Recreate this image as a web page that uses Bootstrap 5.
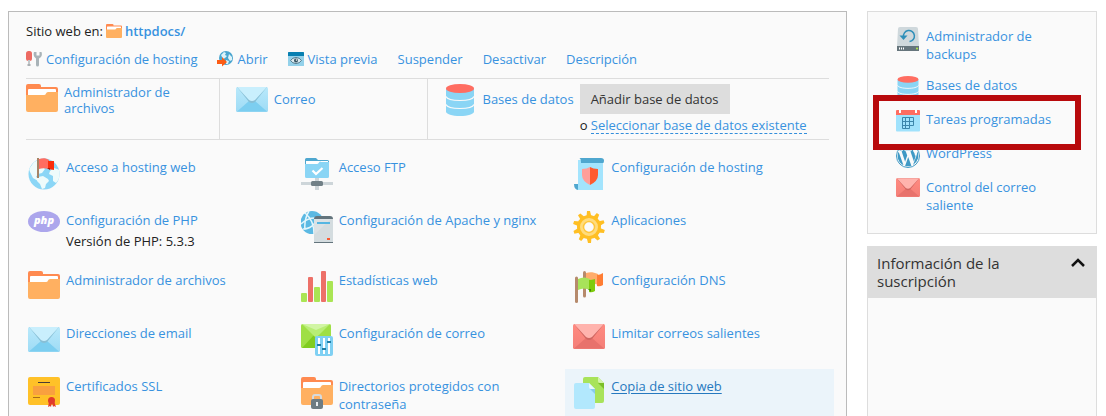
<!DOCTYPE html>
<html lang="es">
<head>
<meta charset="utf-8">
<meta name="viewport" content="width=device-width, initial-scale=1">
<title>httpdocs/</title>
<link href="https://cdn.jsdelivr.net/npm/bootstrap@5.3.0/dist/css/bootstrap.min.css" rel="stylesheet">
<style>
html { scrollbar-width: none; }
body { font: 13px/18px "Open Sans", "Noto Sans", sans-serif; color: #222; background: #fff; }
a { color: #3892df; text-decoration: none; }
a:hover { text-decoration: underline; }
svg { display: block; flex: none; }
.page { display: grid; grid-template-columns: minmax(0, 1fr) 230px; gap: 20px; padding: 11px 9px 0 8px; }
.panel { background: #fafafa; border: 1px solid #bbb; }
.site { padding: 10px 17px 24px; border-bottom: 0; }
.site-title { gap: 3px; }
.site-title svg { margin-top: 2px; }
.site-nav { gap: 4px 20px; margin-top: 10px; }
.site-nav a { gap: 4px; }
.site-nav svg { margin-top: 1px; }
.tools { display: grid; grid-template-columns: 24% 26% 1fr; margin: 10px 0; border: solid #ddd; border-width: 1px 0; }
.tool { min-height: 60px; padding-top: 5px; gap: 6px; }
.tool + .tool { border-left: 1px solid #ddd; padding-left: 16px; }
.tool-name { line-height: 16px; max-width: 130px; }
.tool-line { line-height: 30px; }
.btn-add { font-size: 13px; line-height: 18px; padding: 6px 11px; background: #ddd; color: #333; border: 0; border-radius: 0; }
.or-line { line-height: 16px; margin-top: 3px; }
.dashed { border-bottom: 1px dashed #338edb; display: inline-block; }
.features { display: grid; grid-template-columns: repeat(3, minmax(0, 1fr)); gap: 5px 4px; margin: 0 -5px 0 -6px; }
.feature { padding: 8px; gap: 6px; }
.feature p { margin: 3px 0 0; }
.feature.current { background: #ebf4fa; }
.feature.current a { color: #2679bf; text-decoration: underline; text-underline-offset: 2px; }
.side { border-color: #ddd; }
.shortcuts { padding: 15px 15px 6px 28px; }
.shortcuts li { display: flex; gap: 6px; min-height: 24px; margin-bottom: 10px; position: relative; }
.shortcuts a { padding-bottom: 3px; max-width: 130px; }
.marker { position: absolute; inset: -15px 0 -16px -23px; border: 6px solid #b80a0c; z-index: 1; pointer-events: none; }
.side-head { background: #ddd; border: 0; margin-top: 12px; padding: 8px 11px 8px 10px; font-size: 15px; line-height: 18px; color: #333; }
.side-head span { max-width: 150px; }
.side-head svg { margin-top: 2px; }
</style>
</head>
<body>
<svg width="0" height="0" class="position-absolute" aria-hidden="true">
  <defs>
    <linearGradient id="gBlue" x1="0" y1="0" x2="0" y2="1"><stop offset="0" stop-color="#b9e9fb"/><stop offset="1" stop-color="#9edbf5"/></linearGradient>
    <linearGradient id="gRed" x1="0" y1="0" x2="0" y2="1"><stop offset="0" stop-color="#ff8a80"/><stop offset="1" stop-color="#f47f78"/></linearGradient>
    <clipPath id="globeClip"><circle cx="16" cy="16" r="15.5"/></clipPath>
  </defs>
  <symbol id="folder" viewBox="0 0 32 32">
    <path fill="#ff8a50" d="M0 2a2 2 0 0 1 2-2h11a2 2 0 0 1 2 2v1h15a2 2 0 0 1 2 2v9H0z"/>
    <path fill="#fff" d="M2 6a1 1 0 0 1 1-1h26a1 1 0 0 1 1 1v6H2z"/>
    <path fill="#ffb061" d="M0 11h18q1.500 0 2-1.500T22 8h10v18a2 2 0 0 1-2 2H2a2 2 0 0 1-2-2z"/>
  </symbol>
  <symbol id="mail" viewBox="0 0 32 25">
    <rect width="32" height="25" rx="1.500" fill="url(#gBlue)"/>
    <path fill="#7ccef0" d="M1 24.500 13 14h6l12 10.500z"/>
    <path fill="#88bfd6" d="M1 0h30L19 15q-3 2-6 0z"/>
    <path fill="#c9effd" d="M1 0h30L19 13q-3 2-6 0z"/>
  </symbol>
  <symbol id="mail-red" viewBox="0 0 32 25">
    <rect width="32" height="25" rx="1.500" fill="url(#gRed)"/>
    <path fill="#e8726c" d="M1 24.500 13 14h6l12 10.500z"/>
    <path fill="#cf6560" d="M1 0h30L19 15q-3 2-6 0z"/>
    <path fill="#ffb3ad" d="M1 0h30L19 13q-3 2-6 0z"/>
  </symbol>
  <symbol id="db" viewBox="0 0 32 32">
    <path fill="#8ad5f5" d="M2 4.500h28v23c0 2.500-6 4.500-14 4.500S2 30 2 27.500z"/>
    <path fill="none" stroke="#fafafa" stroke-width="1.200" d="M2 12.500c1 2.500 7 4 14 4s13-1.500 14-4M2 20.500c1 2.500 7 4 14 4s13-1.500 14-4"/>
    <ellipse cx="16" cy="4.500" rx="14" ry="4.500" fill="#ff6d61"/>
  </symbol>
  <symbol id="globe-flag" viewBox="0 0 32 32">
    <circle cx="16" cy="16" r="15.500" fill="#8bd6f6"/>
    <g clip-path="url(#globeClip)" fill="#eefbfb">
      <path d="M1 11 6 4l6-3 4 2-2 5 3 3-3 4-4 1-2 3 4 2-2 2-5-3-3-6z"/>
      <path d="m10 19 5-1 5 3 1 2-3 3-1 4-3 1-2-5-3-3z"/>
      <path d="m22 13 4-3 6 2v8l-4 5-3-2v-5l-4-2z"/>
    </g>
    <path fill="#a58467" d="M9 0h2v20H9z"/>
    <path fill="#ff6d61" d="M11 1c4-1 7-1 10 1v9c-4-1-7-1-10 0z"/>
    <path fill="#fa2d0b" d="M20 3h6v9l-6-1z"/>
    <path fill="#a31909" d="m19 10 3 0v2z"/>
  </symbol>
  <symbol id="cert" viewBox="0 0 32 32">
    <rect width="32" height="28" rx="2" fill="#ffc128"/>
    <path fill="#f9a03f" d="M5 9h22v9H5z"/>
    <path fill="#4a3d35" d="M10 5h12v1H10z"/><path fill="#a86b1d" d="M5 20h7v1H5z"/>
    <path fill="#e23c2a" d="m21 25-1 5 2-1 1 1 1-5 1 5 1-1 2 1-2-6z"/>
    <circle cx="23.500" cy="23.500" r="3.500" fill="#e03b2b"/>
  </symbol>
  <symbol id="ftp" viewBox="0 0 32 32">
    <path fill="#4fa7cf" d="M4 1.500Q4 0 5.500 0H15l2 2h9.500Q28 2 28 3.500V9H4z"/>
    <path fill="#fff" d="M5 3h22v5H5z"/>
    <path fill="#8ad5f5" d="M4 6h12q1 0 2-1.500T20 4h8v14.500q0 1.500-1.500 1.500h-21Q4 20 4 18.500z"/>
    <path fill="none" stroke="#fff" stroke-width="2.200" d="m11.500 12.500 3.500 3.500 6.500-6"/>
    <path fill="#cdd5d9" d="M14 20h4v12h-4zM0 24h32v3H0z"/>
    <rect x="10" y="23" width="12" height="5" rx="1.500" fill="#718087"/>
  </symbol>
  <symbol id="server" viewBox="0 0 32 32">
    <circle cx="11" cy="11.500" r="11.500" fill="#5bb9e3"/>
    <path fill="none" stroke="#e3f6fc" stroke-width="1.500" d="M4 2c5 4 9 11 9 21M0 13c5-5 13-7 21-5M2 18c5 0 9-2 12-6M8 0c-3 5-5 10-4 19"/>
    <path fill="#63747c" d="M13 8q0-3 3-3h13q3 0 3 3v24H13z"/>
    <path fill="#dce2e5" d="M13 8h19v23H13z"/>
    <path fill="#c7d0d4" d="M13 24 30 8h2v23H13z" opacity=".35"/>
    <rect x="16" y="11" width="13" height="2" fill="#55b6e2"/>
    <rect x="26" y="27" width="3" height="2" fill="#fa5a32"/>
  </symbol>
  <symbol id="stats" viewBox="0 0 32 31">
    <g fill="#aae554"><rect y="22" width="6" height="9" rx="1"/><rect x="13" y="16" width="6" height="15" rx="1"/><rect x="26" y="10" width="6" height="21" rx="1"/></g>
    <g fill="#ed7068"><rect x="7" y="6" width="5" height="25" rx="1"/><rect x="20" width="5" height="31" rx="1"/></g>
  </symbol>
  <symbol id="mail-cfg" viewBox="0 0 32 32">
    <rect width="30" height="24" rx="1.500" fill="#9fdf45"/>
    <path fill="#80cc20" d="M1 24 13 11h4l12 13z"/>
    <path fill="#b8ee75" d="M1 0h28L17 12q-2 2-4 0z"/>
    <path fill="#d1f5a4" d="M1 0h28L15 6z"/>
    <rect x="14" y="12" width="18" height="20" rx="2" fill="#7fd0f3"/>
    <path fill="#fff" d="M17 14h2v16h-2zM22 14h2v16h-2zM27 14h2v16h-2z"/>
    <path fill="#1e7da5" d="M16 20h4v2h-4zM21 24h4v2h-4zM26 17h4v2h-4z"/>
  </symbol>
  <symbol id="folder-lock" viewBox="0 0 32 32">
    <use href="#folder" width="32" height="32"/>
    <path fill="none" stroke="#d5dade" stroke-width="2" d="M12 23v-3q0-2 2-2h4q2 0 2 2v3"/>
    <rect x="10" y="22" width="12" height="10" rx="2" fill="#6d7b82"/>
    <path fill="#e9edef" d="M15 25h2v4h-2z"/>
  </symbol>
  <symbol id="scroll" viewBox="0 0 32 32">
    <path fill="#4fa7cf" d="M1 26h5v6q-5 0-5-6z"/>
    <path fill="#a3e4fd" d="M5 2h25v30H5z"/>
    <path fill="#4fa7cf" d="M6 0h22q3 0 3 2.500T30 5H8Q8 0 6 0z"/>
    <path fill="#ff9e9a" d="M17 9q-3 2-8 2v6q0 6 8 10z"/>
    <path fill="#ff5a2e" d="M17 9q3 2 8 2v6q0 6-8 10z"/>
  </symbol>
  <symbol id="gear" viewBox="0 0 32 32">
    <g fill="#ffbf23">
      <path id="tooth" d="M13.500 6 14 0h3l1.500 6z"/>
      <use href="#tooth" transform="rotate(36 16 16)"/><use href="#tooth" transform="rotate(72 16 16)"/><use href="#tooth" transform="rotate(108 16 16)"/><use href="#tooth" transform="rotate(144 16 16)"/><use href="#tooth" transform="rotate(180 16 16)"/><use href="#tooth" transform="rotate(216 16 16)"/><use href="#tooth" transform="rotate(252 16 16)"/><use href="#tooth" transform="rotate(288 16 16)"/><use href="#tooth" transform="rotate(324 16 16)"/>
      <circle cx="16" cy="16" r="12"/>
    </g>
    <circle cx="16" cy="16" r="7.500" fill="#fafafa" stroke="#ffdc7d" stroke-width="3"/>
    <circle cx="16" cy="16" r="5.500" fill="#fafafa" stroke="#ffc63a" stroke-width="1.500"/>
  </symbol>
  <symbol id="flags" viewBox="0 0 32 32">
    <path fill="#b68a6c" d="M10 1.500a1.500 1.500 0 0 1 3 0V25a1.500 1.500 0 0 1-3 0z"/>
    <path fill="#ffac6b" d="M13 2c4-1 7-1 12 1v11c-4-2-8-2-12-1z"/>
    <path fill="#ff7d33" d="M24 4q3 0 6-2v12q-3 2-6 1z"/>
    <path fill="#b68a6c" d="M2 7a1.500 1.500 0 0 1 3 0v23.500a1.500 1.500 0 0 1-3 0z"/>
    <path fill="#a8e35a" d="M5 8c4-2 8-2 12 0v11c-4-2-8-2-12 0z"/>
    <path fill="#7ecb0c" d="M16 9q3 0 6-1v12q-3 2-6 1z"/>
    <path fill="#438d00" d="M15 18h3v3z"/>
  </symbol>
  <symbol id="copy" viewBox="0 0 32 32">
    <path fill="#a8e35a" d="M10 2q0-2 2-2h13l6 6v18q0 2-2 2H12q-2 0-2-2z"/>
    <path fill="#7bbf27" d="m25 6 6 6V6z"/><path fill="#d4f4a9" d="M25 0v4q0 2 2 2h4z"/>
    <path fill="#b2e8fd" d="M1 8q0-2 2-2h13l6 6v18q0 2-2 2H3q-2 0-2-2z"/>
    <path fill="#88cbe9" d="m17 12 5 5v-5z"/><path fill="#e8f9ff" d="M16 6v4q0 2 2 2h4z"/>
  </symbol>
  <symbol id="tools" viewBox="0 0 16 16">
    <rect x="0" y="0" width="6" height="10" rx="2.500" fill="#ed6a62"/>
    <path fill="#c3c8cb" d="M2 9h2v6H2z"/><path fill="#aaafb2" d="M1.500 13h3v2h-3z"/>
    <path fill="#a9b3b8" d="M8 1q-1 3 .5 5L10 7.500V14q0 1.500 1.500 1.500T13 14V7.500L15 6q1.500-2 .5-5l-2 0v3.500h-3V1z"/>
  </symbol>
  <symbol id="open" viewBox="0 0 16 16">
    <circle cx="9" cy="7" r="7" fill="#4aa5cf"/>
    <path fill="#def3fa" d="m4 4 3-3 2 1-1 2 2 1-2 2-2 1zM12 3l3 3v3l-2 1-2-3zM9 9l3 1-1 3H9z"/>
    <path fill="#fc5c14" d="M0 9h5V6l5 5-5 4.500V13H0z"/>
  </symbol>
  <symbol id="preview" viewBox="0 0 16 16">
    <path fill="#93d1ea" d="M0 2h16v12.500q0 .5-.5.5H.5q-.5 0-.5-.5z"/>
    <path fill="#087fb1" d="M0 1.500Q0 1 .5 1h15q.500 0 .5.500V5H0z"/>
    <path fill="#dceaf0" stroke="#52798b" d="M2.500 9.500q2-3 5.500-3t5.500 3q-2 3-5.500 3t-5.500-3z"/>
    <circle cx="8" cy="9.500" r="2" fill="#315362"/><circle cx="8.500" cy="9" r=".8" fill="#fff"/>
  </symbol>
  <symbol id="backup" viewBox="0 0 24 24">
    <path fill="#cfd8dc" d="M1 19 2 2q0-2 2-2h16q2 0 2 2l1 17z"/>
    <path fill="#66757c" d="M1 19h22v5H1z"/>
    <path fill="#fff" d="M3 20.500h1v2H3zM5 20.500h1v2H5zM7 20.500h1v2H7z"/><circle cx="21" cy="21.500" r="1" fill="#b1ef45"/>
    <path fill="none" stroke="#2e8fb9" stroke-width="1.500" d="M7.500 10a5.500 5.500 0 1 1 6 4.500"/>
    <path fill="#2e8fb9" d="M3.500 8.500h8L7.500 13z"/>
  </symbol>
  <symbol id="calendar" viewBox="0 0 24 22">
    <path fill="#a0e2fc" d="M0 4h24v16.500q0 1-1 1H1q-1 0-1-1z"/>
    <path fill="#ff6d61" d="M0 1q0-1 1-1h22q1 0 1 1v4H0z"/>
    <path fill="#fff" d="M3 0h2v3H3zM19 0h2v3h-2z"/>
    <path fill="none" stroke="#3c86ab" d="M6.500 7.500h11v8h-4v3h-7zM6.500 11.500h11M6.500 15.500h7M9.500 7.500v11M13.500 7.500v8"/>
  </symbol>
  <symbol id="wp" viewBox="0 0 24 24">
    <g fill="#3f99c5">
      <path d="M1.700 12c0 4.100 2.400 7.600 5.800 9.300L2.600 7.800C2 9.100 1.700 10.500 1.700 12zM18.900 11.500c0-1.300-.5-2.200-.9-2.900-.5-.8-1-1.600-1-2.400 0-1 .7-1.900 1.700-1.900A10.300 10.300 0 0 0 3.400 6.400c2 .1 3.300-.1 3.300-.1.500 0 .6.800 0 .8l-1.100.1 3.500 10.500 2.100-6.300-1.500-4.200-1-.1c-.5 0-.5-.8.100-.8h6.700c.5 0 .6.800 0 .8l-1.100.1 3.500 10.400 1-3.200c.4-1.300.7-2.200.7-2.900zM12.200 12.900l-3.100 9c2.100.6 4.300.5 6.300-.2zM21.100 7.100c.2 1.900-.2 3.500-.9 5.300L17 20.900A10.300 10.300 0 0 0 21.100 7.100z"/>
    </g>
    <circle cx="12" cy="12" r="11.500" fill="none" stroke="#3f99c5"/>
  </symbol>
</svg>

<div class="page min-vh-100">
  <main class="panel site">
    <div class="site-title d-flex align-items-center">Sitio web en: <svg width="16" height="16"><use href="#folder"/></svg> <a href="#" class="fw-semibold">httpdocs/</a></div>
    <nav class="site-nav d-flex flex-wrap">
      <a href="#" class="d-flex"><svg width="16" height="16"><use href="#tools"/></svg>Configuración de hosting</a>
      <a href="#" class="d-flex"><svg width="16" height="16"><use href="#open"/></svg>Abrir</a>
      <a href="#" class="d-flex"><svg width="16" height="16"><use href="#preview"/></svg>Vista previa</a>
      <a href="#">Suspender</a>
      <a href="#">Desactivar</a>
      <a href="#">Descripción</a>
    </nav>
    <section class="tools">
      <div class="tool d-flex"><svg width="32" height="32"><use href="#folder"/></svg><a href="#" class="tool-name">Administrador de archivos</a></div>
      <div class="tool d-flex"><svg width="32" height="31"><use href="#mail"/></svg><a href="#" class="tool-line">Correo</a></div>
      <div class="tool d-flex"><svg width="32" height="32"><use href="#db"/></svg><a href="#" class="tool-line text-nowrap">Bases de datos</a>
        <div><button type="button" class="btn btn-add d-block">Añadir base de datos</button><div class="or-line">o <a href="#" class="dashed">Seleccionar base de datos existente</a></div></div>
      </div>
    </section>
    <section class="features">
      <div class="feature d-flex"><svg width="32" height="32"><use href="#globe-flag"/></svg><div><a href="#">Acceso a hosting web</a></div></div>
      <div class="feature d-flex"><svg width="32" height="32"><use href="#ftp"/></svg><div><a href="#">Acceso FTP</a></div></div>
      <div class="feature d-flex"><svg width="32" height="32"><use href="#scroll"/></svg><div><a href="#">Configuración de hosting</a></div></div>

      <div class="feature d-flex">
        <svg width="32" height="21" viewBox="0 0 32 21">
          <ellipse cx="16" cy="10.500" rx="16" ry="10.500" fill="#aca6ec"/>
          <text x="16" y="13" text-anchor="middle" fill="#fff" font-family="Open Sans, sans-serif" font-weight="800" font-style="italic" font-size="11">php</text>
        </svg>
        <div><a href="#">Configuración de PHP</a><p>Versión de PHP: 5.3.3</p></div></div>
      <div class="feature d-flex"><svg width="32" height="32"><use href="#server"/></svg><div><a href="#">Configuración de Apache y nginx</a></div></div>
      <div class="feature d-flex"><svg width="32" height="32"><use href="#gear"/></svg><div><a href="#">Aplicaciones</a></div></div>

      <div class="feature d-flex"><svg width="32" height="32"><use href="#folder"/></svg><div><a href="#">Administrador de archivos</a></div></div>
      <div class="feature d-flex"><svg width="32" height="31"><use href="#stats"/></svg><div><a href="#">Estadísticas web</a></div></div>
      <div class="feature d-flex"><svg width="32" height="32"><use href="#flags"/></svg><div><a href="#">Configuración DNS</a></div></div>

      <div class="feature d-flex"><svg width="32" height="31"><use href="#mail"/></svg><div><a href="#">Direcciones de email</a></div></div>
      <div class="feature d-flex"><svg width="32" height="32"><use href="#mail-cfg"/></svg><div><a href="#">Configuración de correo</a></div></div>
      <div class="feature d-flex"><svg width="32" height="25"><use href="#mail-red"/></svg><div><a href="#">Limitar correos salientes</a></div></div>

      <div class="feature d-flex"><svg width="32" height="32"><use href="#cert"/></svg><div><a href="#">Certificados SSL</a></div></div>
      <div class="feature d-flex"><svg width="32" height="32"><use href="#folder-lock"/></svg><div><a href="#">Directorios protegidos con contraseña</a></div></div>
      <div class="feature current d-flex"><svg width="32" height="32"><use href="#copy"/></svg><div><a href="#">Copia de sitio web</a></div></div>
    </section>
  </main>

  <aside class="d-flex flex-column">
    <ul class="panel side shortcuts list-unstyled mb-0">
      <li><svg width="24" height="24"><use href="#backup"/></svg><a href="#">Administrador de backups</a></li>
      <li><svg width="24" height="24"><use href="#db"/></svg><a href="#">Bases de datos</a></li>
      <li><svg width="24" height="22"><use href="#calendar"/></svg><a href="#" class="text-nowrap">Tareas programadas</a><span class="marker"></span></li>
      <li><svg width="24" height="24"><use href="#wp"/></svg><a href="#">WordPress</a></li>
      <li><svg width="24" height="19"><use href="#mail-red"/></svg><a href="#">Control del correo saliente</a></li>
    </ul>
    <button type="button" class="side-head d-flex justify-content-between text-start"><span>Información de la suscripción</span>
      <svg width="16" height="12" viewBox="0 0 16 12"><path d="m2 10 6-6 6 6" fill="none" stroke="#111" stroke-width="2.500"/></svg></button>
    <div class="panel side border-top-0 border-bottom-0 flex-grow-1"></div>
  </aside>
</div>
<script src="https://cdn.jsdelivr.net/npm/bootstrap@5.3.0/dist/js/bootstrap.bundle.min.js"></script>
</body>
</html>
